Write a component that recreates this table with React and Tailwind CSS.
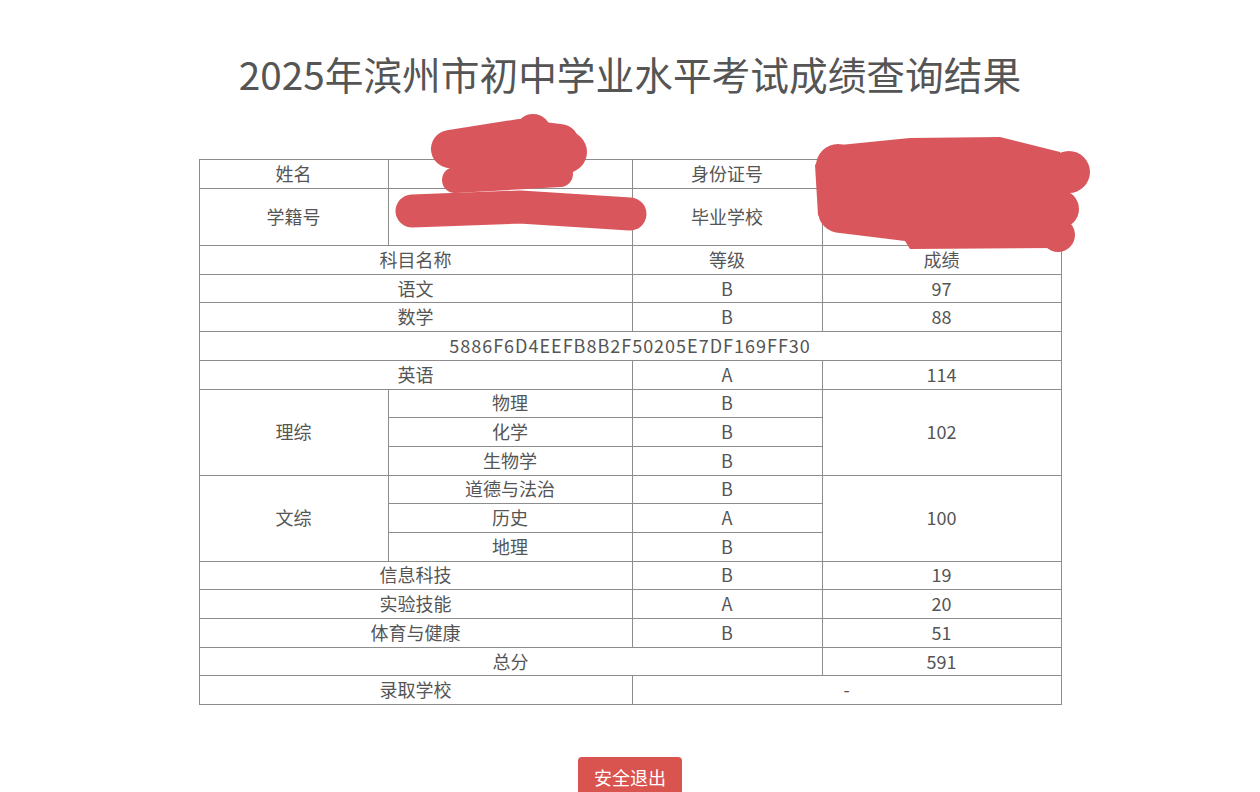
import React from 'react';

const cell = 'border border-[#8c8c8c] text-center align-middle px-0 pt-0 pb-[2px] font-normal';

const subjects = [
  { name: '语文', level: 'B', score: '97' },
  { name: '数学', level: 'B', score: '88' },
];

const Scribbles = () => (
  <svg
    className="absolute left-0 top-0 pointer-events-none"
    width="1260"
    height="792"
    viewBox="0 0 1260 792"
    fill="#d9575c"
    stroke="#d9575c"
    strokeLinecap="round"
    strokeLinejoin="round"
  >
    {/* name */}
    <polyline points="450,149 520,138 560,143" strokeWidth="38" fill="none" />
    <circle cx="533" cy="132" r="18" stroke="none" />
    <circle cx="566" cy="152" r="21" stroke="none" />
    <polygon points="450,150 565,150 568,172 455,182" stroke="none" />
    <polyline points="455,180 560,174" strokeWidth="26" fill="none" />
    <polyline points="412,211 520,207 630,214" strokeWidth="33" fill="none" />
    {/* id / school */}
    <polygon
      points="830,146 910,138 1000,137 1060,152 1066,190 1062,225 1058,248 910,249 905,241 840,233 818,215 815,165"
      stroke="none"
    />
    <circle cx="838" cy="166" r="22" stroke="none" />
    <circle cx="840" cy="211" r="22" stroke="none" />
    <circle cx="1069" cy="172" r="21" stroke="none" />
    <circle cx="1060" cy="209" r="19" stroke="none" />
    <circle cx="1058" cy="235" r="17" stroke="none" />
  </svg>
);

export default function App() {
  return (
    <div
      className="relative w-full h-[792px] overflow-hidden bg-white text-[#555]"
      style={{ fontFamily: '"Noto Sans CJK SC", "Noto Sans", sans-serif' }}
    >
      <h1 className="pt-[46px] text-center text-[38.7px] leading-[54px] font-normal text-[#555]">
        2025年滨州市初中学业水平考试成绩查询结果
      </h1>

      <table className="mt-[59px] mx-auto w-[862px] table-fixed border-collapse text-[18px] leading-[22px]">
        <colgroup>
          <col className="w-[189px]" />
          <col className="w-[244px]" />
          <col className="w-[190px]" />
          <col className="w-[239px]" />
        </colgroup>
        <tbody>
          <tr className="h-[28.7px]">
            <td className={cell}>姓名</td>
            <td className={cell}></td>
            <td className={cell}>身份证号</td>
            <td className={cell}></td>
          </tr>
          <tr className="h-[57.4px]">
            <td className={cell}>学籍号</td>
            <td className={cell}></td>
            <td className={cell}>毕业学校</td>
            <td className={cell}></td>
          </tr>
          <tr className="h-[28.7px]">
            <td className={cell} colSpan={2}>科目名称</td>
            <td className={cell}>等级</td>
            <td className={cell}>成绩</td>
          </tr>
          {subjects.map((s) => (
            <tr key={s.name} className="h-[28.7px]">
              <td className={cell} colSpan={2}>{s.name}</td>
              <td className={cell}>{s.level}</td>
              <td className={cell}>{s.score}</td>
            </tr>
          ))}
          <tr className="h-[28.7px]">
            <td className={`${cell} tracking-[1px]`} colSpan={4}>5886F6D4EEFB8B2F50205E7DF169FF30</td>
          </tr>
          <tr className="h-[28.7px]">
            <td className={cell} colSpan={2}>英语</td>
            <td className={cell}>A</td>
            <td className={cell}>114</td>
          </tr>
          <tr className="h-[28.7px]">
            <td className={cell} rowSpan={3}>理综</td>
            <td className={cell}>物理</td>
            <td className={cell}>B</td>
            <td className={cell} rowSpan={3}>102</td>
          </tr>
          <tr className="h-[28.7px]">
            <td className={cell}>化学</td>
            <td className={cell}>B</td>
          </tr>
          <tr className="h-[28.7px]">
            <td className={cell}>生物学</td>
            <td className={cell}>B</td>
          </tr>
          <tr className="h-[28.7px]">
            <td className={cell} rowSpan={3}>文综</td>
            <td className={cell}>道德与法治</td>
            <td className={cell}>B</td>
            <td className={cell} rowSpan={3}>100</td>
          </tr>
          <tr className="h-[28.7px]">
            <td className={cell}>历史</td>
            <td className={cell}>A</td>
          </tr>
          <tr className="h-[28.7px]">
            <td className={cell}>地理</td>
            <td className={cell}>B</td>
          </tr>
          <tr className="h-[28.7px]">
            <td className={cell} colSpan={2}>信息科技</td>
            <td className={cell}>B</td>
            <td className={cell}>19</td>
          </tr>
          <tr className="h-[28.7px]">
            <td className={cell} colSpan={2}>实验技能</td>
            <td className={cell}>A</td>
            <td className={cell}>20</td>
          </tr>
          <tr className="h-[28.7px]">
            <td className={cell} colSpan={2}>体育与健康</td>
            <td className={cell}>B</td>
            <td className={cell}>51</td>
          </tr>
          <tr className="h-[28.7px]">
            <td className={cell} colSpan={3}>总分</td>
            <td className={cell}>591</td>
          </tr>
          <tr className="h-[28.7px]">
            <td className={cell} colSpan={2}>录取学校</td>
            <td className={cell} colSpan={2}>-</td>
          </tr>
        </tbody>
      </table>

      <div className="mt-[52px] flex justify-center">
        <button className="h-[40px] px-4 rounded bg-[#d9534f] text-white text-[18px] leading-[26px]">
          安全退出
        </button>
      </div>

      <Scribbles />
    </div>
  );
}
